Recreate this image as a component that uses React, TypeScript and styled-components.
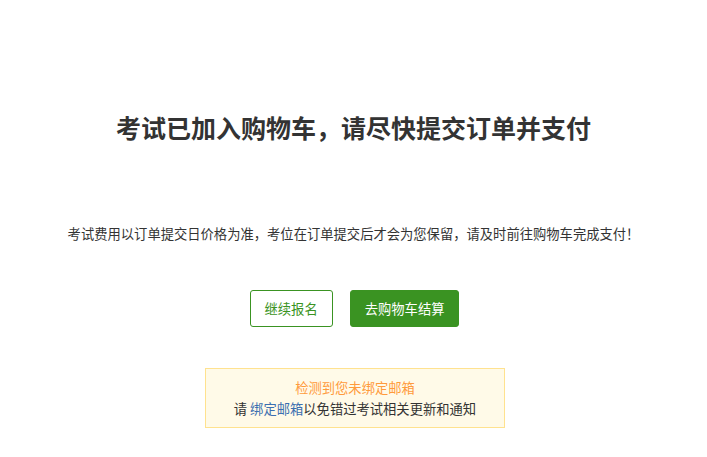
import React from "react";
import styled, { createGlobalStyle } from "styled-components";

const GlobalStyle = createGlobalStyle`
  html, body {
    margin: 0;
    padding: 0;
    background: #ffffff;
  }
  body {
    font-family: "Microsoft YaHei", "Noto Sans CJK SC", "Noto Sans", sans-serif;
    color: #333333;
  }
`;

export default function App() {
  return (
    <>
      <GlobalStyle />
      <Page>
        <Title>考试已加入购物车，请尽快提交订单并支付</Title>
        <Notice>
          考试费用以订单提交日价格为准，考位在订单提交后才会为您保留，请及时前往购物车完成支付！
        </Notice>
        <Actions>
          <Button>继续报名</Button>
          <Button $primary>去购物车结算</Button>
        </Actions>
        <EmailTip>
          <TipTitle>检测到您未绑定邮箱</TipTitle>
          <TipText>
            请 <TipLink href="#">绑定邮箱</TipLink>以免错过考试相关更新和通知
          </TipText>
        </EmailTip>
      </Page>
    </>
  );
}

const Page = styled.div`
  display: flex;
  flex-direction: column;
  align-items: center;
  padding-top: 109px;
`;

const Title = styled.h1`
  margin: 0;
  font-size: 25px;
  line-height: 36px;
  font-weight: bold;
  color: #333333;
`;

const Notice = styled.p`
  margin: 79px 0 0;
  font-size: 13.3px;
  line-height: 20px;
  color: #333333;
`;

const Actions = styled.div`
  display: flex;
  gap: 17px;
  margin-top: 46px;
  margin-left: 2px;
`;

const Button = styled.button<{ $primary?: boolean }>`
  height: 37px;
  padding: 0 14px;
  border-radius: 3px;
  border: 1px solid #3a9322;
  background: ${(p) => (p.$primary ? "#3a9322" : "#ffffff")};
  color: ${(p) => (p.$primary ? "#ffffff" : "#3a9322")};
  font-family: inherit;
  font-size: 13.3px;
  cursor: pointer;
`;

const EmailTip = styled.div`
  box-sizing: border-box;
  width: 300px;
  margin-top: 41px;
  margin-left: 3px;
  padding: 8px 0;
  border: 1px solid #ffe28f;
  background: #fffae8;
  text-align: center;
  font-size: 13.3px;
  line-height: 21px;
`;

const TipTitle = styled.div`
  color: #ff9a3c;
`;

const TipText = styled.div`
  color: #333333;
`;

const TipLink = styled.a`
  color: #3b6fb0;
  text-decoration: none;
`;
